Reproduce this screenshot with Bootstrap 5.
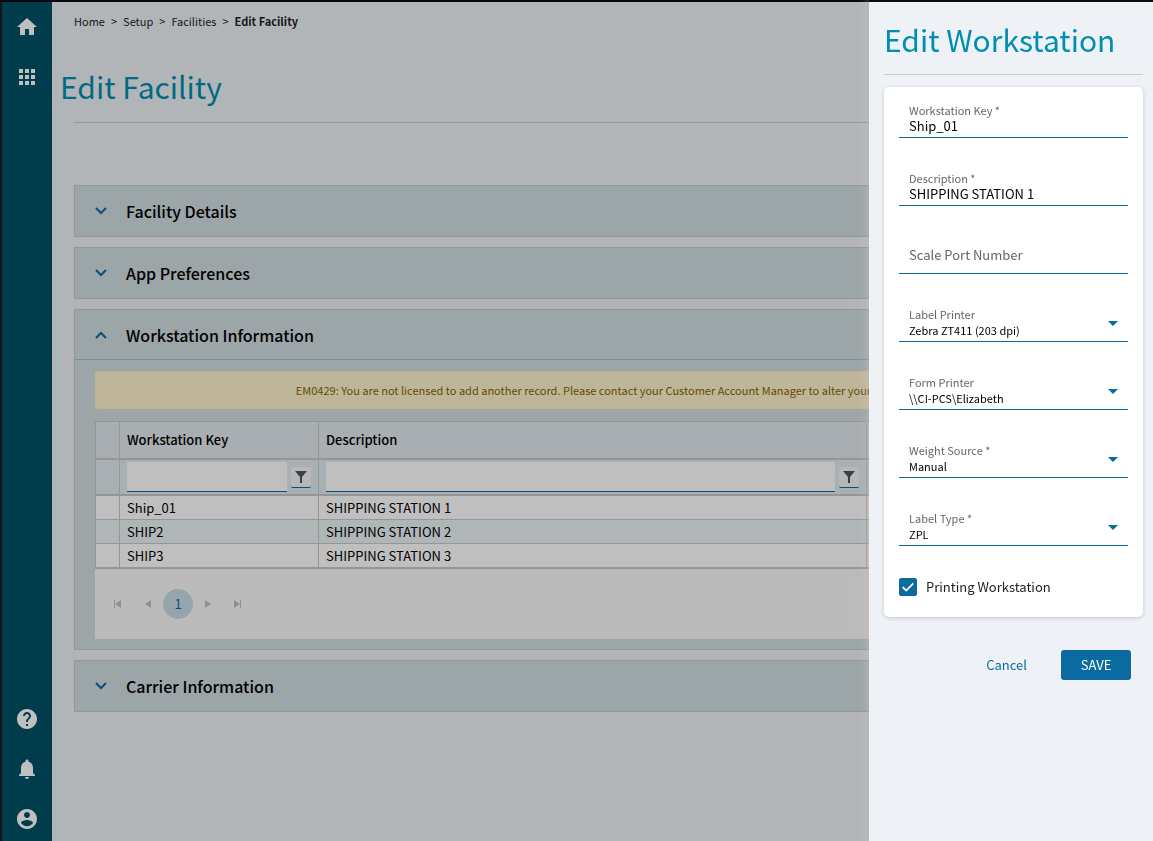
<!DOCTYPE html>
<html lang="en">
<head>
<meta charset="utf-8">
<meta name="viewport" content="width=device-width, initial-scale=1">
<title>Edit Facility</title>
<link rel="stylesheet" href="https://cdn.jsdelivr.net/npm/bootstrap@5.3.0/dist/css/bootstrap.min.css">
<style>
  :root { --ink-blue: #0b6ba1; --title-blue: #008eb0; --page: #eef2f6; --line: #c8c8c8; }
  body { font-family: "Noto Sans CJK JP", "Noto Sans", sans-serif; font-size: 13px; line-height: 18px; color: #000; background: var(--page); border-top: 2px solid #0d0b0b; overflow: hidden; }
  .shell { min-height: calc(100vh - 2px); border-left: 2px solid #1c1a2a; }
  .rail { width: 50px; background: #005165; padding: 13px 0 10px; }
  .rail a { display: block; width: 24px; height: 24px; color: #fff; }
  .rail svg { display: block; width: 24px; height: 24px; fill: currentColor; }
  .rail .stack { gap: 26px; }
  .page-main { padding: 10px 19px 0 22px; min-width: 0; }
  .crumbs { font-size: 11px; --bs-breadcrumb-divider: '>'; --bs-breadcrumb-item-padding-x: 6px; --bs-breadcrumb-divider-color: #222; }
  .crumbs a { color: #222; text-decoration: none; }
  .crumbs .active { color: #222; }
  .big-title { font-size: 30px; line-height: 40px; font-weight: 400; color: var(--title-blue); margin: 0; }
  .page-title { margin: 36px 0 16px -14px; }
  .rule { border: 0; border-top: 1px solid #c8cbce; opacity: 1; margin: 0; }
  .panels { gap: 10px; margin-top: 62px; }
  .fold { background: #d0dcdf; border: 1px solid var(--line); }
  .fold-head { display: flex; align-items: center; gap: 19px; width: 100%; height: 50px; padding: 0 20px; border: 0; background: none; font-size: 16px; line-height: 24px; font-weight: 500; color: #000; text-align: left; }
  .fold-head[aria-expanded="true"] { height: 49px; }
  .fold-head svg { width: 12px; height: 8px; fill: none; stroke: var(--ink-blue); stroke-width: 2; }
  .fold-body { border-top: 1px solid #99c3cb; padding: 11px 20px 10px; }
  .notice { font-size: 11px; line-height: 16px; padding: 10px; margin: 0 0 12px; text-align: center; color: #856404; background: #fff3cd; border: 1px solid #ffeeba; border-radius: 2px; white-space: nowrap; }
  .grid { width: 100%; table-layout: fixed; border-collapse: separate; border-spacing: 0; background: #fff; border-left: 1px solid var(--line); border-top: 1px solid var(--line); }
  .grid th, .grid td { padding: 0 7px; border-right: 1px solid var(--line); border-bottom: 1px solid var(--line); }
  .grid .heads th { height: 38px; background: #e1e8ec; border-bottom-width: 2px; font-weight: 500; }
  .grid .filters td { height: 36px; background: #e1ebef; border-bottom-width: 2px; }
  .grid tbody td { height: 24px; line-height: 22px; }
  .grid tbody tr:nth-child(even) td { background: #ebf3f6; }
  .grid tbody tr:last-child td { border-bottom-width: 2px; height: 25px; }
  .c-mark { width: 24px; } .c-key { width: 199px; } .c-desc { width: 548px; }
  .filter-box { height: 30px; min-width: 0; border: 0; border-bottom: 1px solid var(--ink-blue); border-radius: 0; background: #fff; }
  .filter-btn { width: 20px; height: 21px; padding: 0; border: 0; border-bottom: 1px solid var(--ink-blue); border-radius: 2px; background: #f5f5f5; }
  .filter-btn svg { display: block; margin: 0 auto; width: 14px; height: 14px; fill: #555; }
  .pager { height: 70px; padding: 0 0 0 8px; background: #fafafa; }
  .pager button { width: 30px; height: 30px; padding: 0; border: 0; border-radius: 50%; background: none; color: #c0c0c0; }
  .pager button svg { display: block; margin: auto; width: 10px; height: 10px; fill: currentColor; }
  .pager .now { background: #c8dde7; color: var(--ink-blue); }
  .drawer.offcanvas { --bs-offcanvas-width: 284px; background: var(--page); color: #222; border-left: 0; border-top: 2px solid #0d0b0b; padding: 17px 10px 0 15px; box-shadow: 0 0 12px rgba(205,195,190,.6); }
  .dim.offcanvas-backdrop.show { opacity: .25; }
  .drawer .rule { margin: 15px 0 12px; }
  .sheet { background: #fff; border: 0; border-radius: 5px; padding: 15px 15px 21px; box-shadow: 0 1px 4px rgba(0,0,0,.18); }
  .entry { position: relative; height: 36px; margin-bottom: 32px; border-bottom: 1px solid var(--ink-blue); }
  .entry label { display: block; padding: 0 10px; font-size: 11px; line-height: 16px; color: #666; }
  .entry input, .entry select { display: block; width: 100%; height: 16px; padding: 0 10px; border: 0; border-radius: 0; background: none; appearance: none; outline: 0; font-size: 13px; line-height: 16px; color: #000; }
  .entry select { font-size: 11px; }
  .entry.resting label { position: absolute; inset: 0; font-size: 13px; line-height: 34px; }
  .entry.pick::after { content: ""; position: absolute; right: 10px; top: 15px; border: 5px solid transparent; border-top-color: var(--ink-blue); border-bottom: 0; }
  .tick { height: 18px; gap: 9px; line-height: 20px; }
  .tick .form-check-input { width: 18px; height: 18px; margin: 0; border-radius: 2px; }
  .tick .form-check-input:checked { background-color: var(--ink-blue); border-color: var(--ink-blue); background-image: url("data:image/svg+xml,%3csvg xmlns='http://www.w3.org/2000/svg' viewBox='0 0 18 18'%3e%3cpath fill='none' stroke='%23fff' stroke-width='2' d='M3 9l4 4 8-8'/%3e%3c/svg%3e"); }
  .actions { margin: 33px 12px 0 0; gap: 20px; }
  .actions .btn { height: 30px; padding: 0 14px; font-size: 13px; line-height: 30px; border: 0; border-radius: 3px; }
  .btn-plain { color: var(--ink-blue); }
  .actions .btn-save { width: 70px; color: #fff; background: var(--ink-blue); }
</style>
</head>
<body>
<div class="shell d-flex">
  <nav class="rail d-flex flex-column justify-content-between align-items-center flex-shrink-0" aria-label="Main">
    <div class="stack d-flex flex-column">
      <a href="#" aria-label="Home"><svg viewBox="0 0 24 24"><path d="M10 20v-6h4v6h5v-8h3L12 3 2 12h3v8z"/></svg></a>
      <a href="#" aria-label="Apps"><svg viewBox="0 0 24 24"><path d="M4 8h4V4H4zm6 12h4v-4h-4zm-6 0h4v-4H4zm0-6h4v-4H4zm6 0h4v-4h-4zm6-10v4h4V4zm-6 4h4V4h-4zm6 6h4v-4h-4zm0 6h4v-4h-4z"/></svg></a>
    </div>
    <div class="stack d-flex flex-column">
      <a href="#" aria-label="Help"><svg viewBox="0 0 24 24"><path d="M12 2C6.480 2 2 6.480 2 12s4.480 10 10 10 10-4.480 10-10S17.520 2 12 2zm1 17h-2v-2h2zm2.070-7.750-.9.920C13.450 12.900 13 13.500 13 15h-2v-.5c0-1.100.45-2.100 1.170-2.830l1.240-1.260c.37-.36.59-.86.59-1.410 0-1.100-.9-2-2-2s-2 .9-2 2H8c0-2.210 1.790-4 4-4s4 1.790 4 4c0 .88-.36 1.680-.93 2.250z"/></svg></a>
      <a href="#" aria-label="Notifications"><svg viewBox="0 0 24 24"><path d="M12 22c1.100 0 2-.9 2-2h-4c0 1.100.89 2 2 2zm6-6v-5c0-3.070-1.640-5.640-4.500-6.320V4c0-.83-.67-1.500-1.500-1.500s-1.500.67-1.500 1.500v.68C7.630 5.360 6 7.920 6 11v5l-2 2v1h16v-1z"/></svg></a>
      <a href="#" aria-label="Account"><svg viewBox="0 0 24 24"><path d="M12 2C6.480 2 2 6.480 2 12s4.480 10 10 10 10-4.480 10-10S17.520 2 12 2zm0 3c1.660 0 3 1.340 3 3s-1.340 3-3 3-3-1.340-3-3 1.340-3 3-3zm0 14.200c-2.500 0-4.710-1.280-6-3.220.03-1.990 4-3.080 6-3.080 1.990 0 5.970 1.090 6 3.080-1.290 1.940-3.500 3.220-6 3.220z"/></svg></a>
    </div>
  </nav>

  <main class="page-main flex-grow-1">
    <nav aria-label="Breadcrumb">
      <ol class="breadcrumb crumbs mb-0">
        <li class="breadcrumb-item"><a href="#">Home</a></li>
        <li class="breadcrumb-item"><a href="#">Setup</a></li>
        <li class="breadcrumb-item"><a href="#">Facilities</a></li>
        <li class="breadcrumb-item active" aria-current="page"><strong>Edit Facility</strong></li>
      </ol>
    </nav>
    <h1 class="big-title page-title">Edit Facility</h1>
    <hr class="rule">

    <div class="panels d-flex flex-column">
      <section class="fold"><button type="button" class="fold-head" aria-expanded="false"><svg viewBox="0 0 12 8"><path d="M1 1l5 5 5-5"/></svg>Facility Details</button></section>
      <section class="fold"><button type="button" class="fold-head" aria-expanded="false"><svg viewBox="0 0 12 8"><path d="M1 1l5 5 5-5"/></svg>App Preferences</button></section>
      <section class="fold">
        <button type="button" class="fold-head" aria-expanded="true"><svg viewBox="0 0 12 8"><path d="M1 7l5-5 5 5"/></svg>Workstation Information</button>
        <div class="fold-body">
          <div class="notice alert" role="alert">EM0429: You are not licensed to add another record. Please contact your Customer Account Manager to alter your license.</div>
          <table class="grid">
            <colgroup><col class="c-mark"><col class="c-key"><col class="c-desc"><col></colgroup>
            <thead>
              <tr class="heads"><th></th><th scope="col">Workstation Key</th><th scope="col">Description</th><th></th></tr>
              <tr class="filters">
                <td></td>
                <td><div class="d-flex align-items-center gap-1"><input class="filter-box flex-grow-1" type="text" aria-label="Filter by workstation key"><button type="button" class="filter-btn flex-shrink-0" aria-label="Workstation key filter"><svg viewBox="0 0 14 14"><path d="M1 1h12L8 7v6H6V7z"/></svg></button></div></td>
                <td><div class="d-flex align-items-center gap-1"><input class="filter-box flex-grow-1" type="text" aria-label="Filter by description"><button type="button" class="filter-btn flex-shrink-0" aria-label="Description filter"><svg viewBox="0 0 14 14"><path d="M1 1h12L8 7v6H6V7z"/></svg></button></div></td>
                <td></td>
              </tr>
            </thead>
            <tbody>
              <tr><td></td><td>Ship_01</td><td>SHIPPING STATION 1</td><td></td></tr>
              <tr><td></td><td>SHIP2</td><td>SHIPPING STATION 2</td><td></td></tr>
              <tr><td></td><td>SHIP3</td><td>SHIPPING STATION 3</td><td></td></tr>
            </tbody>
          </table>
          <div class="pager d-flex align-items-center">
            <button type="button" aria-label="First page"><svg viewBox="0 0 10 10"><path d="M1 1h1v8H1zM8 1v8L2 5z"/></svg></button>
            <button type="button" aria-label="Previous page"><svg viewBox="0 0 10 10"><path d="M8 1v8L2 5z"/></svg></button>
            <button type="button" class="now">1</button>
            <button type="button" aria-label="Next page"><svg viewBox="0 0 10 10"><path d="M2 1v8l6-4z"/></svg></button>
            <button type="button" aria-label="Last page"><svg viewBox="0 0 10 10"><path d="M1 1v8l6-4zM7 1h1v8H7z"/></svg></button>
          </div>
        </div>
      </section>
      <section class="fold"><button type="button" class="fold-head" aria-expanded="false"><svg viewBox="0 0 12 8"><path d="M1 1l5 5 5-5"/></svg>Carrier Information</button></section>
    </div>
  </main>
</div>

<div class="offcanvas-backdrop show dim"></div>
<aside class="offcanvas offcanvas-end show drawer" data-bs-backdrop="false" aria-labelledby="drawer-title">
  <h2 class="big-title" id="drawer-title">Edit Workstation</h2>
  <hr class="rule">
  <form>
    <div class="card sheet">
      <div class="entry"><label for="f-key">Workstation Key *</label><input id="f-key" type="text" value="Ship_01"></div>
      <div class="entry"><label for="f-desc">Description *</label><input id="f-desc" type="text" value="SHIPPING STATION 1"></div>
      <div class="entry resting"><label for="f-port">Scale Port Number</label><input id="f-port" type="text"></div>
      <div class="entry pick"><label for="f-label">Label Printer</label><select id="f-label"><option>Zebra ZT411 (203 dpi)</option></select></div>
      <div class="entry pick"><label for="f-form">Form Printer</label><select id="f-form"><option>\\CI-PCS\Elizabeth</option></select></div>
      <div class="entry pick"><label for="f-weight">Weight Source *</label><select id="f-weight"><option>Manual</option></select></div>
      <div class="entry pick"><label for="f-type">Label Type *</label><select id="f-type"><option>ZPL</option></select></div>
      <div class="tick d-flex align-items-center"><input class="form-check-input" type="checkbox" id="f-print" checked><label for="f-print">Printing Workstation</label></div>
    </div>
    <div class="actions d-flex justify-content-end">
      <button type="button" class="btn btn-plain">Cancel</button>
      <button type="submit" class="btn btn-save">SAVE</button>
    </div>
  </form>
</aside>
<script src="https://cdn.jsdelivr.net/npm/bootstrap@5.3.0/dist/js/bootstrap.bundle.min.js"></script>
</body>
</html>
